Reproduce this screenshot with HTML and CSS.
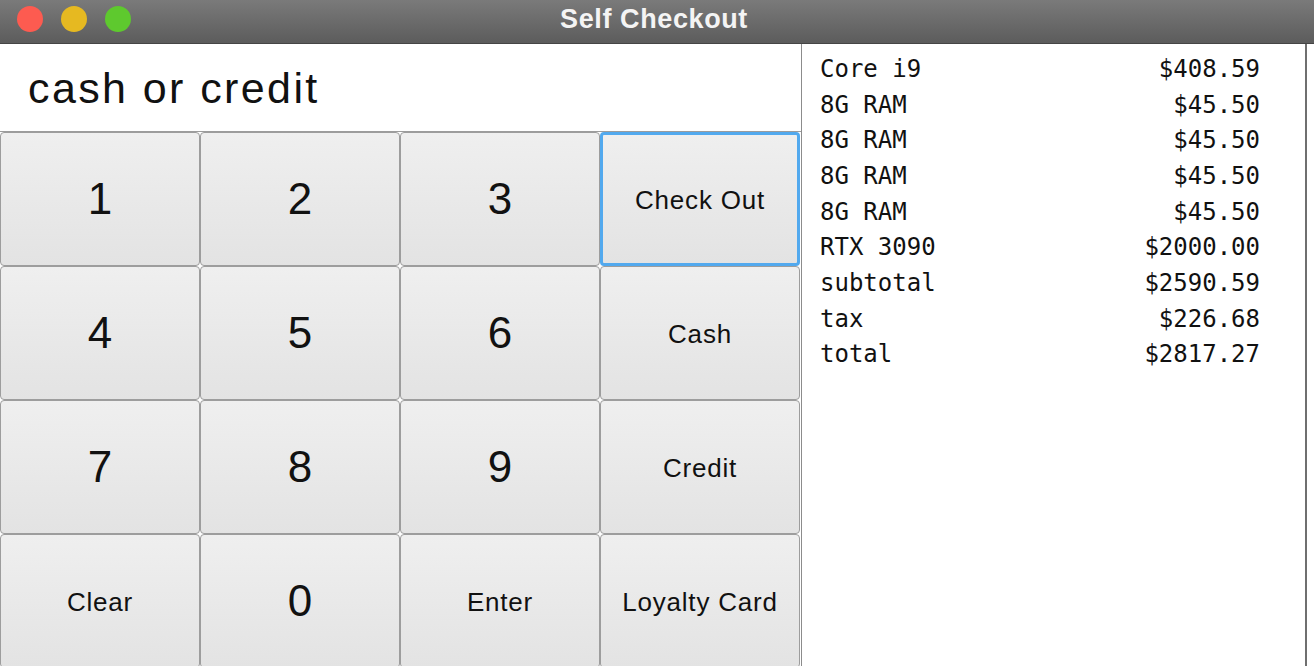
FILE: index.html
```html
<!DOCTYPE html>
<html lang="en">
<head>
<meta charset="utf-8">
<title>Self Checkout</title>
<link rel="stylesheet" href="styles.css">
</head>
<body>
<div class="window">
  <header class="titlebar">
    <div class="lights">
      <span class="light red"></span>
      <span class="light yellow"></span>
      <span class="light green"></span>
    </div>
    <h1 class="title">Self Checkout</h1>
    <div class="spacer"></div>
  </header>
  <main class="content">
    <section class="register">
      <div class="display">cash or credit</div>
      <div class="keypad">
        <button class="key digit">1</button>
        <button class="key digit">2</button>
        <button class="key digit">3</button>
        <button class="key label focused">Check Out</button>
        <button class="key digit">4</button>
        <button class="key digit">5</button>
        <button class="key digit">6</button>
        <button class="key label">Cash</button>
        <button class="key digit">7</button>
        <button class="key digit">8</button>
        <button class="key digit">9</button>
        <button class="key label">Credit</button>
        <button class="key label">Clear</button>
        <button class="key digit">0</button>
        <button class="key label">Enter</button>
        <button class="key label">Loyalty Card</button>
      </div>
    </section>
    <section class="receipt">
      <div class="line"><span>Core i9</span><span>$408.59</span></div>
      <div class="line"><span>8G RAM</span><span>$45.50</span></div>
      <div class="line"><span>8G RAM</span><span>$45.50</span></div>
      <div class="line"><span>8G RAM</span><span>$45.50</span></div>
      <div class="line"><span>8G RAM</span><span>$45.50</span></div>
      <div class="line"><span>RTX 3090</span><span>$2000.00</span></div>
      <div class="line"><span>subtotal</span><span>$2590.59</span></div>
      <div class="line"><span>tax</span><span>$226.68</span></div>
      <div class="line"><span>total</span><span>$2817.27</span></div>
    </section>
  </main>
</div>
</body>
</html>
```
FILE: styles.css
```css
* { box-sizing: border-box; }
html, body {
  margin: 0;
  padding: 0;
  background: #ffffff;
  height: 666px;
  overflow: hidden;
}
.window {
  width: 1314px;
  height: 666px;
  display: flex;
  flex-direction: column;
  font-family: "Liberation Sans", Arial, sans-serif;
  color: #111;
}
.titlebar {
  height: 44px;
  flex: none;
  display: grid;
  grid-template-columns: 1fr auto 1fr;
  align-items: center;
  background: linear-gradient(#7a7a7a, #5c5c5c);
  border-bottom: 1px solid #454545;
}
.lights {
  display: flex;
  gap: 18px;
  padding-left: 17px;
  padding-bottom: 5px;
}
.light {
  width: 26px;
  height: 26px;
  border-radius: 50%;
  display: block;
}
.red { background: #fd5b50; }
.yellow { background: #e6b921; }
.green { background: #5ec92e; }
.title {
  margin: 0;
  padding-bottom: 4px;
  padding-right: 6px;
  font-size: 27px;
  font-weight: bold;
  letter-spacing: 0.6px;
  color: #f4f4f4;
}
.content {
  flex: 1;
  display: flex;
  min-height: 0;
}
.register {
  width: 801px;
  flex: none;
  display: flex;
  flex-direction: column;
}
.display {
  height: 88px;
  flex: none;
  display: flex;
  align-items: center;
  padding-left: 28px;
  padding-top: 2px;
  font-size: 43px;
  letter-spacing: 2.4px;
  color: #111;
  border-bottom: 1px solid #9c9c9c;
}
.keypad {
  display: grid;
  grid-template-columns: repeat(4, 200px);
  grid-auto-rows: 134px;
  background: #ffffff;
}
.key {
  margin: 0;
  border: 1px solid #9d9d9d;
  border-radius: 4px;
  background: linear-gradient(#efefef, #e3e3e3);
  font-family: "Liberation Sans", Arial, sans-serif;
  color: #111;
  padding: 0;
}
.digit { font-size: 44px; }
.label { font-size: 26px; letter-spacing: 0.8px; padding-top: 2px; }
.focused {
  border: 3px solid #52a9ee;
}
.receipt {
  flex: 1;
  margin-right: 7px;
  border-left: 1px solid #8c8c8c;
  border-right: 2px solid #6f6f6f;
  padding: 7px 45px 0 18px;
  font-family: "DejaVu Sans Mono", "Liberation Mono", monospace;
  font-size: 24px;
  color: #111;
}
.line {
  display: flex;
  justify-content: space-between;
  height: 35.7px;
  align-items: center;
}
```
